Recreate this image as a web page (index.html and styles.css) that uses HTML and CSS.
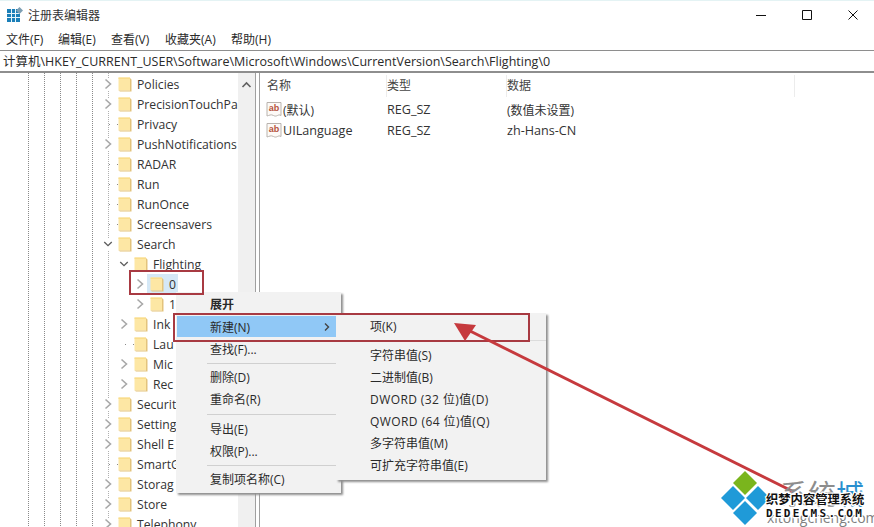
FILE: index.html
```html
<!DOCTYPE html>
<html lang="zh-CN">
<head>
<meta charset="utf-8">
<title>注册表编辑器</title>
<link rel="stylesheet" href="styles.css">
</head>
<body>
<svg class="defs" width="0" height="0">
  <symbol id="folder" viewBox="0 0 14 16">
    <path d="M0.5 1.5H12V14.5H0.5Z" fill="#fde7a4"/>
    <path d="M0.5 1.5H12V3H0.5Z" fill="#f9dc8c"/>
    <path d="M12 2L13.5 3.5V15.5H2L0.5 14.5H12Z" fill="#e3c37c"/>
  </symbol>
  <symbol id="closed" viewBox="0 0 10 12"><path d="M2.5 1.5L7.5 6L2.5 10.5" fill="none" stroke="#a8a8a8" stroke-width="1.6"/></symbol>
  <symbol id="open" viewBox="0 0 12 10"><path d="M1.5 2.5L6 7L10.5 2.5" fill="none" stroke="#5c5c5c" stroke-width="1.6"/></symbol>
  <symbol id="ab" viewBox="0 0 16 17">
    <path d="M1 1.5H15V14.5C12 12.5 11 16.5 7.5 14.5C5 13 3 14.5 1 15Z" fill="#fdfaf7" stroke="#b9b3ae"/>
    <text x="8" y="10" text-anchor="middle" class="ab-text">ab</text>
  </symbol>
</svg>

<div class="window">
  <header class="titlebar">
    <svg class="app-icon" width="16" height="16" viewBox="0 0 16 16">
      <path d="M0 2H13V15H0Z" fill="#1b7fb8"/>
      <path d="M4.5 2V15M8.5 2V15M0 6.5H13M0 10.5H13" stroke="#e8f4fa" stroke-width="1"/>
      <path d="M12.5 0L16 3.5L12.5 7L9 3.5Z" fill="#7d9fb3"/>
    </svg>
    <span class="title">注册表编辑器</span>
    <div class="controls">
      <svg width="11" height="11" viewBox="0 0 11 11"><path d="M0 5.5H10" stroke="#111"/></svg>
      <svg width="11" height="11" viewBox="0 0 11 11"><path d="M0.5 0.5H9.5V9.5H0.5Z" fill="none" stroke="#111"/></svg>
      <svg width="11" height="11" viewBox="0 0 11 11"><path d="M0.5 0.5L9.5 9.5M9.5 0.5L0.5 9.5" stroke="#111"/></svg>
    </div>
  </header>
  <nav class="menubar">
    <span>文件(F)</span><span>编辑(E)</span><span>查看(V)</span><span>收藏夹(A)</span><span>帮助(H)</span>
  </nav>
  <div class="address">计算机\HKEY_CURRENT_USER\Software\Microsoft\Windows\CurrentVersion\Search\Flighting\0</div>
  <main class="panes">
    <div class="tree">
      <div class="row d1"><svg class="chev"><use href="#closed"/></svg><svg class="fld"><use href="#folder"/></svg><span>Policies</span></div>
      <div class="row d1"><svg class="chev"><use href="#closed"/></svg><svg class="fld"><use href="#folder"/></svg><span>PrecisionTouchPad</span></div>
      <div class="row d1"><i class="leaf"></i><svg class="fld"><use href="#folder"/></svg><span>Privacy</span></div>
      <div class="row d1"><svg class="chev"><use href="#closed"/></svg><svg class="fld"><use href="#folder"/></svg><span>PushNotifications</span></div>
      <div class="row d1"><i class="leaf"></i><svg class="fld"><use href="#folder"/></svg><span>RADAR</span></div>
      <div class="row d1"><i class="leaf"></i><svg class="fld"><use href="#folder"/></svg><span>Run</span></div>
      <div class="row d1"><i class="leaf"></i><svg class="fld"><use href="#folder"/></svg><span>RunOnce</span></div>
      <div class="row d1"><i class="leaf"></i><svg class="fld"><use href="#folder"/></svg><span>Screensavers</span></div>
      <div class="row d1"><svg class="chev"><use href="#open"/></svg><svg class="fld"><use href="#folder"/></svg><span>Search</span></div>
      <div class="row d2"><svg class="chev"><use href="#open"/></svg><svg class="fld"><use href="#folder"/></svg><span>Flighting</span></div>
      <div class="row d3"><svg class="chev"><use href="#closed"/></svg><div class="selected"><svg class="fld"><use href="#folder"/></svg><span>0</span></div></div>
      <div class="row d3"><svg class="chev"><use href="#closed"/></svg><svg class="fld"><use href="#folder"/></svg><span>1</span></div>
      <div class="row d2"><svg class="chev"><use href="#closed"/></svg><svg class="fld"><use href="#folder"/></svg><span>Ink</span></div>
      <div class="row d2"><i class="leaf"></i><svg class="fld"><use href="#folder"/></svg><span>Lau</span></div>
      <div class="row d2"><svg class="chev"><use href="#closed"/></svg><svg class="fld"><use href="#folder"/></svg><span>Mic</span></div>
      <div class="row d2"><svg class="chev"><use href="#closed"/></svg><svg class="fld"><use href="#folder"/></svg><span>Rec</span></div>
      <div class="row d1"><svg class="chev"><use href="#closed"/></svg><svg class="fld"><use href="#folder"/></svg><span>Securit</span></div>
      <div class="row d1"><svg class="chev"><use href="#closed"/></svg><svg class="fld"><use href="#folder"/></svg><span>Setting</span></div>
      <div class="row d1"><svg class="chev"><use href="#closed"/></svg><svg class="fld"><use href="#folder"/></svg><span>Shell E</span></div>
      <div class="row d1"><i class="leaf"></i><svg class="fld"><use href="#folder"/></svg><span>SmartG</span></div>
      <div class="row d1"><svg class="chev"><use href="#closed"/></svg><svg class="fld"><use href="#folder"/></svg><span>Storag</span></div>
      <div class="row d1"><svg class="chev"><use href="#closed"/></svg><svg class="fld"><use href="#folder"/></svg><span>Store</span></div>
      <div class="row d1"><svg class="chev"><use href="#closed"/></svg><svg class="fld"><use href="#folder"/></svg><span>Telephony</span></div>
    </div>
    <div class="scrollbar"><svg width="11" height="8" viewBox="0 0 11 8"><path d="M1.5 6L5.5 2L9.5 6" fill="none" stroke="#606060" stroke-width="1.6"/></svg></div>
    <div class="splitter"></div>
    <section class="list">
      <div class="list-head"><span>名称</span><span>类型</span><span>数据</span></div>
      <div class="list-row"><span class="name cjk"><svg class="ab"><use href="#ab"/></svg>(默认)</span><span>REG_SZ</span><span class="cjk">(数值未设置)</span></div>
      <div class="list-row"><span class="name"><svg class="ab"><use href="#ab"/></svg>UILanguage</span><span>REG_SZ</span><span>zh-Hans-CN</span></div>
    </section>
  </main>
</div>

<div class="menu context">
  <div class="item strong">展开</div>
  <div class="item active">新建(N)<svg class="sub" width="8" height="10" viewBox="0 0 8 10"><path d="M2 1.5L5.5 5L2 8.5" fill="none" stroke="#444" stroke-width="1.4"/></svg></div>
  <div class="item">查找(F)...</div>
  <hr class="sep-a">
  <div class="item">删除(D)</div>
  <div class="item">重命名(R)</div>
  <hr class="sep-b">
  <div class="item">导出(E)</div>
  <div class="item">权限(P)...</div>
  <hr class="sep-a">
  <div class="item">复制项名称(C)</div>
</div>
<div class="menu submenu">
  <div class="item">项(K)</div>
  <hr>
  <div class="item">字符串值(S)</div>
  <div class="item">二进制值(B)</div>
  <div class="item wide">DWORD (32 位)值(D)</div>
  <div class="item wide">QWORD (64 位)值(Q)</div>
  <div class="item">多字符串值(M)</div>
  <div class="item">可扩充字符串值(E)</div>
</div>

<div class="mark mark-folder"></div>
<div class="mark mark-new"></div>

<svg class="overlay" width="874" height="527" viewBox="0 0 874 527">
  <path d="M792 491L462 327" stroke="#c63a3e" stroke-width="3" fill="none"/>
  <path d="M454 323L476 325L465 341Z" fill="#c63a3e"/>
  <path d="M745 471L757 483L745 495L733 483Z" fill="#7ab51d"/>
  <path d="M733 486L745 498L733 510L721 498Z" fill="#1f9ad8"/>
  <path d="M758 486L770 498L758 510L746 498Z" fill="#1f9ad8"/>
  <path d="M745 501L757 513L745 525L733 513Z" fill="#1f9ad8"/>
  <text x="780" y="505" class="wm-big">系统<tspan fill="#2a8fcf">城</tspan></text>
  <text x="767" y="523" class="wm-url">xitongcheng.com</text>
  <text x="766" y="504" class="wm-dede">织梦内容管理系统</text>
  <text x="766" y="517" class="wm-dede wm-latin">DEDECMS.COM</text>
</svg>
</body>
</html>
```

FILE: styles.css
```css
* { box-sizing: border-box; }
html, body { margin: 0; height: 100%; overflow: hidden; background: #fff; }
body {
  position: relative;
  font-family: "Open Sans", "Noto Sans CJK SC", sans-serif;
  font-size: 12px;
  color: #2a2a2a;
}
.defs { position: absolute; }
.window { display: flex; flex-direction: column; height: 527px; width: 874px; }

.titlebar {
  display: flex;
  align-items: center;
  height: 30px;
  flex: none;
  padding: 0 0 1px 7px;
  border-top: 1px solid #e4f3f4;
}
.app-icon { flex: none; }
.title { margin-left: 5px; font-size: 12px; color: #333; }
.controls { margin-left: auto; display: flex; gap: 35px; padding-right: 15px; align-items: center; }

.menubar {
  display: flex;
  height: 20px;
  flex: none;
  padding-left: 6px;
  gap: 8px;
  align-items: center;
  line-height: 20px;
}
.menubar span:nth-child(1) { width: 44px; }
.menubar span:nth-child(2) { width: 45px; }
.menubar span:nth-child(3) { width: 46px; }
.menubar span:nth-child(4) { width: 58px; }

.address {
  flex: none;
  height: 23px;
  line-height: 21px;
  font-size: 12.5px;
  padding-left: 3px;
  border-top: 1px solid #8e8e8e;
  border-bottom: 2px solid #8e8e8e;
  white-space: nowrap;
}

.panes { display: flex; flex: 1; min-height: 0; overflow: hidden; }
.tree {
  width: 238px;
  flex: none;
  padding-top: 1px;
  overflow: hidden;
  background-image:
    repeating-linear-gradient(to bottom, #8a8a8a 0 1px, transparent 1px 2px),
    repeating-linear-gradient(to bottom, #8a8a8a 0 1px, transparent 1px 2px),
    repeating-linear-gradient(to bottom, #8a8a8a 0 1px, transparent 1px 2px),
    repeating-linear-gradient(to bottom, #8a8a8a 0 1px, transparent 1px 2px),
    repeating-linear-gradient(to bottom, #8a8a8a 0 1px, transparent 1px 2px),
    repeating-linear-gradient(to bottom, #b0b0b0 0 1px, transparent 1px 2px);
  background-size: 1px 100%;
  background-repeat: no-repeat;
  background-position: 28px 0, 44px 0, 60px 0, 76px 0, 92px 0, 108px 0;
}
.row {
  display: flex;
  align-items: center;
  height: 20px;
  white-space: nowrap;
  color: #333;
  font-size: 12.2px;
}
.row span { margin-left: 5px; }
.d1 { padding-left: 103px; }
.d2 { padding-left: 119px; }
.d3 { padding-left: 135px; }
.chev { width: 10px; height: 12px; flex: none; background: #fff; margin-right: 5px; }
.leaf {
  width: 15px;
  height: 1px;
  flex: none;
  background: repeating-linear-gradient(to right, transparent 0 6px, #8a8a8a 6px 7px, transparent 7px 8px);
}
.fld { width: 14px; height: 16px; flex: none; }
.selected {
  display: flex;
  align-items: center;
  height: 20px;
  width: 31px;
  margin-left: -3px;
  padding-left: 3px;
  background: #d5e8f6;
}
.scrollbar {
  width: 17px;
  flex: none;
  background: #f0f0f0;
  padding: 8px 0 0 3px;
}
.scrollbar svg { display: block; }
.splitter {
  width: 5px;
  flex: none;
  background: #fff;
  border-left: 1px solid #a0a0a0;
  border-right: 1px solid #a0a0a0;
}
.list { flex: 1; padding-left: 7px; }
.list-head, .list-row {
  display: grid;
  grid-template-columns: 120px 120px 1fr;
  align-items: center;
}
.list-head {
  height: 24px;
  margin-bottom: 2px;
  padding-top: 1px;
  color: #444;
  grid-template-columns: 120px 120px 288px;
}
.list-head span { height: 22px; line-height: 22px; border-right: 1px solid #ececec; }
.list-row { height: 21px; color: #333; font-size: 12.6px; }
.cjk { font-size: 12px; }
.name { display: flex; align-items: center; gap: 1px; }
.ab { width: 16px; height: 17px; flex: none; margin-left: -1px; }
.ab-text { font: bold 9px "Liberation Sans", sans-serif; fill: #b5533c; }

.menu {
  position: absolute;
  background: #f2f2f2;
  box-shadow: 2px 2px 2px #8f8f8f;
  color: #2a2a2a;
}
.menu hr { height: 1px; border: 0; margin: 0; background: #d0d0d0; }
.item { display: flex; align-items: center; height: 22px; position: relative; }
.context { left: 176px; top: 292px; width: 165px; height: 201px; padding: 1px 4px 0 1px; }
.context .item { padding-left: 33px; }
.context hr.sep-a { margin: 3px 0 2px 30px; }
.context hr.sep-b { margin: 4px 0 3px 30px; }
.strong { font-weight: 700; }
.context .active { background: #90c8f6; height: 21px; margin: 1px 0; }
.sub { margin-left: auto; margin-right: 6px; }
.submenu { left: 336px; top: 313px; width: 210px; height: 167px; padding-top: 2px; }
.submenu .item { padding-left: 34px; }
.submenu hr { margin: 3px 0 3px 0; background: #dcdcdc; }
.wide { letter-spacing: 0.42px; }

.mark { position: absolute; border: 2px solid #a83a42; }
.mark-folder { left: 129px; top: 270px; width: 75px; height: 25px; }
.mark-new { left: 173px; top: 313px; width: 357px; height: 29px; }

.overlay { position: absolute; left: 0; top: 0; pointer-events: none; }
.wm-big { font: 28px "Noto Sans CJK SC", sans-serif; fill: #8d8d8d; }
.wm-url { font: 14px "Open Sans", sans-serif; fill: #808080; }
.wm-dede {
  font: bold 12.3px "Noto Sans CJK SC", sans-serif;
  fill: #111;
  stroke: #fff;
  stroke-width: 2.5px;
  paint-order: stroke;
}
.wm-latin { font: bold 11px "DejaVu Sans Mono", monospace; letter-spacing: 2.3px; }
```
